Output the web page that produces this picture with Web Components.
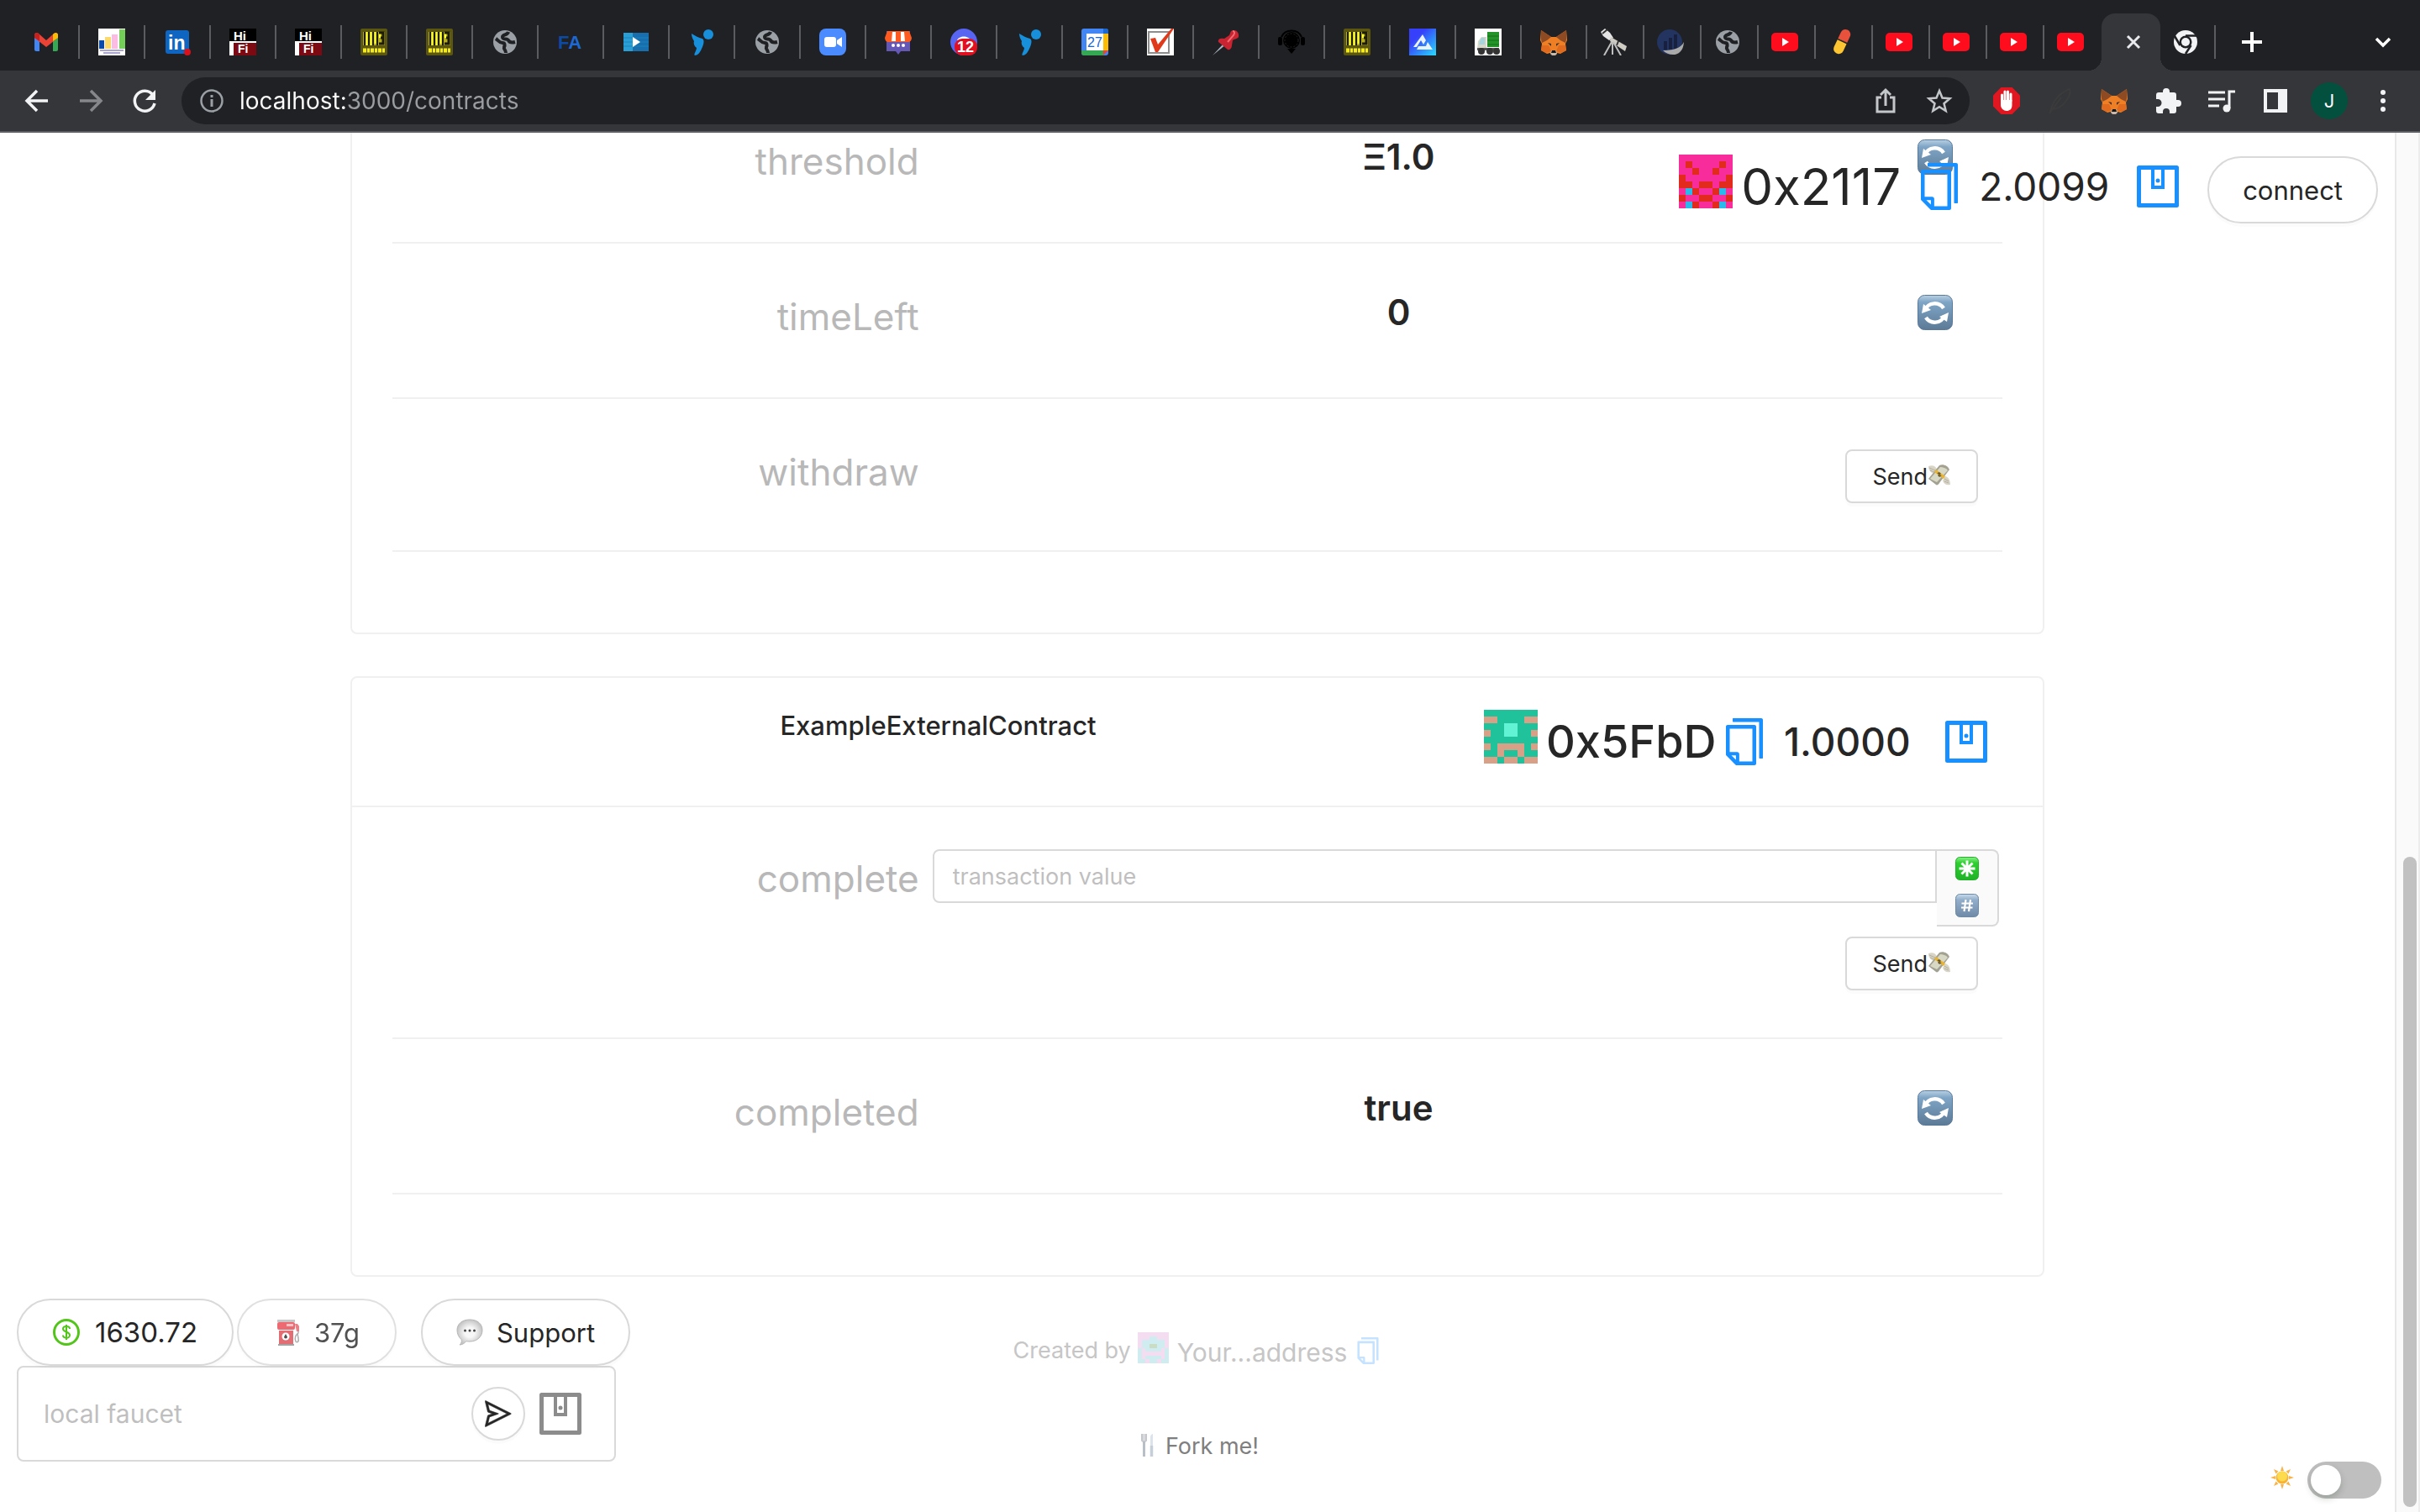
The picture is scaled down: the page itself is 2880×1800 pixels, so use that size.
<!DOCTYPE html>
<html lang="en">
<head>
<meta charset="utf-8">
<title>localhost:3000/contracts</title>
<style>
html,body{margin:0;height:100%}
body{background:#fff;color:#262626;font-family:Inter,"Liberation Sans",sans-serif;overflow:hidden}
</style>
</head>
<body>
<browser-window></browser-window>
<script>
const globe='<circle cx="16" cy="16" r="14" fill="#9aa0a6"/><path d="M5 12c3 2 4 5 8 5 3 0 3 3 2 5-1 3 2 3 2 7" fill="none" stroke="#202124" stroke-width="4"/><path d="M20 4c-1 4-7 3-7 6 0 4 6 1 7 4 1 2 4 3 8 2" fill="none" stroke="#202124" stroke-width="4"/>';
const mp3='<rect width="32" height="32" rx="2" fill="#5c5710"/><path d="M3 4h26v16H3z" fill="#b5ac1f"/><path d="M5 4v16M10 4v16M15 4v16M20 4v16" stroke="#1c1b08" stroke-width="2"/><path d="M7.500 4v16M12.500 4v16M17.500 4v14M23 4v7" stroke="#ffff25" stroke-width="2"/><path d="M22 5h5v6h-3 3v7h-5" fill="none" stroke="#1c1b08" stroke-width="3"/><path d="M3 26h26" stroke="#f3ea22" stroke-width="5" stroke-dasharray="4 1 3 1"/>';
const hifi='<rect width="32" height="32" fill="#fff"/><rect width="32" height="15" fill="#000"/><text x="5" y="14" font-family="Liberation Sans" font-weight="700" font-size="15" fill="#fff">Hi</text><rect x="5" y="17" width="27" height="15" fill="#7d0912"/><text x="10" y="29" font-family="Liberation Sans" font-weight="700" font-size="14" fill="#fff">Fi</text>';
const bird='<circle cx="24" cy="7" r="6" fill="#178fdb"/><path d="M4 6c5 3 8 5 13 6 3 2 1 8-1 12-2 5-5 8-8 8-2-1 2-6 2-9-3-2-4-6-3-8C5 12 4 9 4 6z" fill="#178fdb"/>';
const yt='<rect y="5" width="32" height="22" rx="5" fill="#ff0d1d"/><path d="M13 11l8 5-8 5z" fill="#fff"/>';
const fox='<path d="M1 2l12 8h6l12-8 1 12-2 4 1 8-7 4-4-1-4 3-4-3-4 1-7-4 1-8-2-4z" fill="#ee7f25"/><path d="M1 2l12 8-5 4-6 3-1-4zM31 2l-12 8 5 4 6 3 1-4z" fill="#8e4a22"/><path d="M2 20h8l3 7-6 2-6-3zM30 20h-8l-3 7 6 2 6-3z" fill="#e06a1d"/><path d="M9 17l4 1v3zM23 17l-4 1v3z" fill="#3a3230"/><path d="M13 26h6l1 4-2 2h-4l-2-2z" fill="#c9b8a8"/><path d="M14 26h4l1 3h-6z" fill="#161616"/>';
const refresh='<defs><linearGradient id="g" x2="0" y2="1"><stop stop-color="#b9d0e2"/><stop offset=".2" stop-color="#7fa5c6"/><stop offset="1" stop-color="#5c7a96"/></linearGradient></defs><rect x=".5" y=".5" width="41" height="41" rx="8" fill="url(#g)" stroke="#58799a"/><path d="M9 18a12.500 12.500 0 0 1 22-2" fill="none" stroke="#fff" stroke-width="4.500"/><path d="M32 25a12.500 12.500 0 0 1-22 2" fill="none" stroke="#fff" stroke-width="4.500"/><path d="M7 11l-2 11 11-4zM37 21l-2 11-9-6z" fill="#fff"/>';
const key=(a,b,c,inner)=>`<defs><linearGradient id="g" x2="0" y2="1"><stop stop-color="${a}"/><stop offset=".25" stop-color="${b}"/><stop offset="1" stop-color="${c}"/></linearGradient></defs><rect x=".5" y=".5" width="27" height="27" rx="5" fill="url(#g)" stroke="${c}"/>${inner}`;
const wallet='<path d="M2.500 2.500h45v45h-45z" fill="none" stroke="currentColor" stroke-width="5" stroke-linejoin="round"/><path d="M19 3v23h12V3" fill="none" stroke="currentColor" stroke-width="4"/><circle cx="25" cy="18" r="2.500" fill="currentColor"/>';
const ICONS={
gmail:[32,'<path d="M2 7h6v20H4a2 2 0 0 1-2-2z" fill="#4285f4"/><path d="M24 7h6v18a2 2 0 0 1-2 2h-4z" fill="#34a853"/><path d="M2 8c0-3 3-4 5-2l9 8 9-8c2-2 5-1 5 2v3L16 22 2 11z" fill="#ea4335"/><path d="M2 7.500C2 5 5 4 7 6l1 1v8l-6-4z" fill="#c5221f"/><path d="M30 7.500C30 5 27 4 25 6l-1 1v8l6-4z" fill="#fbbc04"/>'],
chart:[32,'<rect width="32" height="32" fill="#fff"/><path d="M1 14h6v10H1z" fill="#0b4aa8"/><path d="M8 10h7v14H8z" fill="#fbd96b"/><path d="M16 7h7v17h-7z" fill="#fbbbe3"/><path d="M25 1h7v23h-7z" fill="#73cf57"/><path d="M2 26h28M6 29h20" stroke="#a9a5cf" stroke-width="2"/>'],
linkedin:[32,'<rect x="2" y="2" width="28" height="28" rx="3" fill="#0f66c2"/><text x="5" y="25" font-family="Liberation Sans" font-weight="700" font-size="23" fill="#fff">in</text><circle cx="28" cy="28" r="4" fill="#d8111c"/>'],
hifi:[32,hifi],mp3:[32,mp3],globe:[32,globe],bird:[32,bird],yt:[32,yt],fox:[32,fox],
fa:[32,'<text x="1" y="24" font-family="Liberation Sans" font-weight="700" font-size="22" fill="#0d4aa5">F<tspan fill="#1d68d2">A</tspan></text>'],
play:[32,'<rect x="1" y="5" width="30" height="22" fill="#2a9fd6"/><path d="M12 5h19v22H12z" fill="#176fae"/><path d="M1 11h30M1 16h30M1 21h30" stroke="#1d83bd" stroke-width="1"/><path d="M12 10l9 6-9 6z" fill="#fff"/>'],
zoom:[32,'<rect width="32" height="32" rx="8" fill="#4a8cff"/><rect x="6" y="10" width="14" height="12" rx="3" fill="#fff"/><path d="M21 14l6-4v12l-6-4z" fill="#fff"/>'],
store:[32,'<path d="M2 3h28v24H19l-3 4-3-4H2z" fill="#6557b5"/><path d="M3 3h26l3 8c0 3-2 5-4 5H4c-2 0-4-2-4-5z" fill="#ff5a1f"/><path d="M9 4l-1 11h5V4zM19 4v11h5L23 4z" fill="#fff"/><circle cx="10" cy="20" r="2" fill="#fff"/><circle cx="16" cy="20" r="2" fill="#fff"/><circle cx="22" cy="20" r="2" fill="#fff"/>'],
discord:[32,'<circle cx="16" cy="16" r="16" fill="#5865f2"/><path d="M8 14c2-6 14-6 16 0z" fill="#fff"/><rect x="5" y="12" width="27" height="20" rx="9" fill="#e01021"/><text x="18" y="28" text-anchor="middle" font-family="Liberation Sans" font-weight="700" font-size="18" fill="#fff">12</text>'],
calendar:[32,'<rect width="32" height="32" rx="3" fill="#4285f4"/><path d="M26 6h6v20h-6z" fill="#fbbc04"/><path d="M0 26h26v6H2l-2-2z" fill="#34a853"/><path d="M26 26h6l-6 6z" fill="#ea4335"/><path d="M26 0h4l2 2v4h-6z" fill="#1967d2"/><rect x="6" y="6" width="20" height="20" fill="#fff"/><text x="16" y="22" text-anchor="middle" font-family="Liberation Sans" font-size="16" fill="#1967d2">27</text>'],
check:[32,'<rect width="32" height="32" fill="#fff"/><rect x="2" y="4" width="24" height="25" fill="#fff" stroke="#8d8d8d" stroke-width="2"/><path d="M4 12l6-1 3 8L29 0h3L13 28h-3z" fill="#e03a1c"/>'],
pin:[32,'<path d="M0 32L14 17l2 2z" fill="#a9b6c2"/><path d="M22 3c5-3 10 1 9 7-2 3-5 2-7 4l-1 6c0 4-3 6-5 5l-11-9c-1-4 3-5 7-4l6-4z" fill="#c92431"/><path d="M24 3c2 0 3 2 1 5l-7 8" stroke="#f06a70" stroke-width="2" fill="none"/>'],
headset:[32,'<circle cx="16" cy="14" r="10" fill="#000"/><path d="M4 10a13 12 0 0 1 24 0" fill="none" stroke="#000" stroke-width="2"/><rect x="0" y="10" width="5" height="10" rx="2"/><rect x="27" y="10" width="5" height="10" rx="2"/><circle cx="16" cy="14" r="8" fill="none" stroke="#25262a" stroke-dasharray="2 2"/><path d="M11 24l5 6 5-6z" fill="#000"/>'],
alchemy:[32,'<defs><linearGradient id="g" x2="1" y2="1"><stop offset=".3" stop-color="#363ff9"/><stop offset="1" stop-color="#28dcfc"/></linearGradient></defs><rect width="32" height="32" fill="url(#g)"/><path d="M16 7l4 7-3 5-3-5-5 8H5zM11 21h9l2-5 6 9H9z" fill="#e9f2ff"/>'],
truck:[32,'<rect width="32" height="32" fill="#fff"/><path d="M15 4h14v18H15z" fill="#249329"/><path d="M15 9h14M15 14h14M15 19h14" stroke="#14701a"/><path d="M4 15l4-5h6v15H3z" fill="#d9d8c8"/><path d="M6 15l2-4h4v8H5z" fill="#a5d4dc"/><path d="M3 23h26v3H3z" fill="#555"/><circle cx="8" cy="27" r="4" fill="#333"/><circle cx="18" cy="27" r="4" fill="#333"/><circle cx="26" cy="27" r="4" fill="#333"/>'],
telescope:[32,'<path d="M1 4l5-4 6 5 4 6-5 3-7-5z" fill="#e4e4e4"/><path d="M3 6l6-5" stroke="#333" stroke-width="2"/><path d="M13 10l19 11-2 6-18-12z" fill="#cfccc4"/><path d="M22 15l-2 5" stroke="#333" stroke-width="2"/><path d="M14 16L5 32M15 16v15M16 16l9 16" stroke="#bfbfbf" stroke-width="2" fill="none"/>'],
bars:[32,'<circle cx="15" cy="16" r="15" fill="#22345f"/><path d="M8 25V15h4v10zM14 25V11h4v14zM20 25V7h4v18z" fill="#17213f"/><path d="M32 16c-4 8-14 10-25 10 8 8 24 8 25-10z" fill="#a9aaa9"/>'],
pill:[32,'<g transform="rotate(25 16 16)"><path d="M10 14h12v11a6 6 0 0 1-12 0z" fill="#fcc531"/><path d="M10 14V6a6 6 0 0 1 12 0v8z" fill="#e8513b"/><path d="M9 15h14" stroke="#202124" stroke-width="1.500"/></g>'],
chrome:[32,'<circle cx="16" cy="16" r="14" fill="#f1f3f4"/><circle cx="16" cy="16" r="7.500" fill="#202124"/><circle cx="16" cy="16" r="5" fill="#f1f3f4"/><path d="M16 8.500h13M9.500 20L3 9M22.500 20L16 30" stroke="#202124" stroke-width="2.500"/>'],
close:[20,'<path d="M3 3l14 14M17 3L3 17" stroke="#e8eaed" stroke-width="3"/>'],
plus:[28,'<path d="M14 2v24M2 14h24" stroke="#fff" stroke-width="4"/>'],
chevron:[24,'<path d="M4 8l8 8 8-8" stroke="#fff" stroke-width="3.500" fill="none"/>'],
back:[32,'<path d="M29 16H5M16 4L4 16l12 12" stroke="#f1f3f4" stroke-width="3.500" fill="none"/>'],
forward:[32,'<path d="M3 16h24M16 4l12 12-12 12" stroke="#85878a" stroke-width="3.500" fill="none"/>'],
reload:[32,'<path d="M26 9a12 12 0 1 0 2 10" stroke="#f1f3f4" stroke-width="3.500" fill="none"/><path d="M29 3v12H17z" fill="#f1f3f4"/>'],
info:[32,'<circle cx="16" cy="16" r="12.500" stroke="#9aa0a6" stroke-width="2.500" fill="none"/><path d="M16 14v9M16 9v3" stroke="#9aa0a6" stroke-width="3"/>'],
share:[32,'<path d="M11 12H6v17h20V12h-5M16 22V3M10 9l6-6 6 6" stroke="#c4c7ca" stroke-width="3" fill="none"/>'],
star:[32,'<path d="M16 4l3.500 8.500 9 .7-7 6 2.200 8.800L16 23.200 8.300 28l2.200-8.800-7-6 9-.7z" stroke="#c4c7ca" stroke-width="2.500" fill="none"/>'],
adblock:[32,'<path d="M9.400 0h13.200L32 9.400v13.200L22.600 32H9.400L0 22.600V9.400z" fill="#e01620"/><path d="M10.500 16V9M14 15V5M17.500 15V5M21 16V8" stroke="#fff" stroke-width="3" stroke-linecap="round"/><path d="M9 15h13.500v6c0 5-3 7-6.500 7s-7-3-7-7z" fill="#fff"/>'],
feather:[32,'<path d="M4 29c2-9 8-21 23-27 2 5-4 21-19 24M3 31l14-19" stroke="#3b3b3b" stroke-width="2" fill="none"/>'],
puzzle:[32,'<path d="M28 15h-2V9a3 3 0 0 0-3-3h-5V5a4 4 0 0 0-8 0v1H5a3 3 0 0 0-3 3v5h2a4 4 0 0 1 0 9H2v5a3 3 0 0 0 3 3h5v-2a4 4 0 0 1 8 0v2h5a3 3 0 0 0 3-3v-5h2a4 4 0 0 0 0-8z" fill="#f1f3f4"/>'],
music:[32,'<path d="M0 6h20M0 14h20M0 22h13" stroke="#f1f3f4" stroke-width="3"/><path d="M25 25V5h7" stroke="#f1f3f4" stroke-width="3" fill="none"/><circle cx="22" cy="25" r="4.500" fill="#f1f3f4"/>'],
panel:[32,'<path d="M4 4h24v24H4z" stroke="#f1f3f4" stroke-width="4" fill="none"/><path d="M19 3h10v26H19z" fill="#f1f3f4"/>'],
dots:[32,'<circle cx="16" cy="6" r="3" fill="#f1f3f4"/><circle cx="16" cy="16" r="3" fill="#f1f3f4"/><circle cx="16" cy="26" r="3" fill="#f1f3f4"/>'],
refresh:[42,refresh],
star8:[28,key('#8df08c','#2dd02f','#1fb226','<path d="M14 4.500v19M4.500 14h19M7.500 7.500l13 13M20.500 7.500l-13 13" stroke="#fff" stroke-width="3"/>')],
hash:[28,key('#c9dceb','#92aeca','#6f8aa6','<path d="M12.500 7l-2 14M18 7l-2 14M7.500 11.500h13.500M7 16.500h13.500" stroke="#fff" stroke-width="2.200"/>')],
money:[28,'<path d="M1 3c5-2 9 0 10 4l-3 5C4 11 1 8 1 3zM27 25c-5 1-8-1-9-5l3-5c4 1 6 5 6 10z" fill="#d9d5c6"/><path d="M2 5l7 3M3 8l5 2M20 18l5 3M20 21l5 2" stroke="#b3afa0"/><path d="M1 18L14 2c4-2 10 0 12 5L14 23c-1 2-3 3-4 2z" fill="#a3a292"/><path d="M3 18L15 4c3 0 7 1 9 4L11 22z" fill="#d8d9c5"/><path d="M8 10l11 8 2-3-11-8z" fill="#e9b433"/><path d="M12 12c2-2 4 0 2 1s0 3 2 1" stroke="#5d5331" stroke-width="1.500" fill="none"/>'],
copy:[0,'<path fill="currentColor" d="M832 64H296c-4.400 0-8 3.600-8 8v56c0 4.400 3.600 8 8 8h496v688c0 4.400 3.600 8 8 8h56c4.400 0 8-3.600 8-8V96c0-17.700-14.300-32-32-32zM704 192H192c-17.700 0-32 14.300-32 32v530.700c0 8.500 3.400 16.600 9.400 22.600l173.300 173.300c2.200 2.200 4.700 4 7.400 5.500v1.900h4.200c3.500 1.300 7.200 2 11 2H704c17.700 0 32-14.300 32-32V224c0-17.700-14.300-32-32-32zM350 856.200L263.900 770H350v86.200zM664 888H414V746c0-22.100-17.900-40-40-40H232V264h432v624z"/>'],
send:[0,'<path fill="currentColor" stroke="currentColor" stroke-width="14" d="M931.400 498.900L94.900 79.500c-3.400-1.700-7.300-2.100-11-1.200a15.990 15.990 0 0 0-11.700 19.300l86.200 352.200c1.300 5.300 5.200 9.600 10.400 11.300l147.700 50.700-147.600 50.700c-5.200 1.800-9.100 6-10.300 11.300L72.200 926.500c-.9 3.700-.5 7.600 1.200 10.900 3.900 7.900 13.500 11.100 21.500 7.200l836.500-417c3.100-1.500 5.600-4.100 7.200-7.100 3.900-8 .7-17.600-7.200-21.600zM170.800 826.300l50.300-205.600 295.200-101.300c2.300-.8 4.200-2.600 5-5 1.400-4.200-.8-8.700-5-10.200L221.100 403 171 198.200l628 314.900-628.200 313.200z"/>'],
wallet:[50,wallet],
dollar:[32,'<circle cx="16" cy="16" r="14.500" stroke="#52c41a" stroke-width="3" fill="none"/><path d="M20 12c0-4-8-4-8 0s8 3 8 7.500-8 4-8 0M16 7v18" stroke="#52c41a" stroke-width="2" fill="none"/>'],
fuel:[32,'<rect x="4" y="1" width="21" height="3" fill="#b9b9b9"/><rect x="4" y="4" width="21" height="9" rx="2" fill="#ea4650"/><rect x="15" y="6" width="8" height="3" fill="#f9b5b8"/><path d="M6 14h17v16H6z" fill="#dc4a52"/><path d="M5 30h19v2H5z" fill="#8d8d8d"/><circle cx="14" cy="21" r="4.500" fill="#fff"/><path d="M14 18l2 3.500a2 2 0 0 1-4 0z" fill="#222"/><path d="M26 7l3 2v8c-3 2-5 6-3 10 2 2 4 0 3-4l-1-6" stroke="#9a9a9a" stroke-width="1.500" fill="none"/><path d="M25 6h3l2 3v6h-3z" fill="#e2636a"/>'],
bubble:[32,'<defs><radialGradient id="g"><stop offset=".4" stop-color="#f7f7f7"/><stop offset="1" stop-color="#c5c5c5"/></radialGradient></defs><path d="M16 1c9 0 15 5 15 12.500S25 27 16 27c-2 0-3 0-4-.5C10 29 7 31 4 31c2-2 3-4 2-6.500C3 22 1 18 1 13.500 1 6 7 1 16 1z" fill="url(#g)" stroke="#b5b5b5"/><circle cx="10.500" cy="14" r="1.500" fill="#444"/><circle cx="16" cy="14" r="1.500" fill="#444"/><circle cx="21.500" cy="14" r="1.500" fill="#444"/>'],
fork:[28,'<path d="M7 0v8a3 3 0 0 0 5 0V0" stroke="#c4c7cb" stroke-width="2" fill="#d8dadd"/><path d="M9.500 9v18" stroke="#b9bfc6" stroke-width="3"/><path d="M17 14V4c0-3 2-4 3-4v14z" fill="#dbe3ec"/><path d="M18.500 14v13" stroke="#c6ced8" stroke-width="3.500"/>'],
sun:[28,'<g fill="#f8b44a"><path d="M12 6l2-6 2 6zM12 22l2 6 2-6zM6 12l-6 2 6 2zM22 12l6 2-6 2zM6.500 9.500L4 4l5.500 2.500zM21.500 9.500L24 4l-5.500 2.500zM6.500 18.500L4 24l5.500-2.500zM21.500 18.500L24 24l-5.500-2.500z"/></g><circle cx="14" cy="14" r="7.500" fill="#f9b233"/><circle cx="14" cy="12.500" r="6" fill="#fddb4f"/>']
};
const define=(name,render)=>customElements.define(name,class extends HTMLElement{
  connectedCallback(){
    if(this.shadowRoot)return;
    const t=document.createElement('template');
    t.innerHTML='<style>*{box-sizing:border-box}:where(button){font:inherit;color:inherit;cursor:pointer;background:none;border:0;padding:0}</style>'+render(this);
    this.attachShadow({mode:'open'}).append(t.content.cloneNode(true));
  }
});

define('ui-icon',el=>{
  const [s,body]=ICONS[el.getAttribute('name')];
  const px=el.getAttribute('size')||s||32;
  return `<style>:host{display:block;flex:none;line-height:0}svg{display:block}</style><svg width="${px}" height="${px}" viewBox="${s?`0 0 ${s} ${s}`:'64 64 896 896'}" aria-hidden="true">${body}</svg>`;
});

const BLOCKIES={
  pink:[{'.':'#f92c9c',a:'#e22b1c',b:'#2bb8ea'},'........|.a....a.|..a..a..|a......a|aa.aa.aa|.ba..ab.|a..aa..a|.ba..ab.'],
  green:[{'.':'#1fc29a',a:'#d9a088',b:'#62f3d4'},'........|aa....aa|...bb...|a..bb..a|........|a.aaaa.a|..a..a..|aa.aa.aa'],
  pale:[{'.':'#f4dcf1',a:'#cfedf0',b:'#cbdcc4'},'........|...aa...|.aaaaaa.|.aabbaa.|a.aaaa.a|a......a|a.aaaa.a|aa.aa.aa']
};
define('block-avatar',el=>{
  const [c,g]=BLOCKIES[el.getAttribute('kind')],px=el.getAttribute('size')||64;
  const cells=g.split('|').flatMap((r,y)=>[...r].map((k,x)=>k==='.'?'':`<rect x="${x}" y="${y}" width="1" height="1" fill="${c[k]}"/>`)).join('');
  return `<style>:host{display:block;flex:none}svg{display:block}</style><svg width="${px}" height="${px}" viewBox="0 0 8 8" shape-rendering="crispEdges" aria-hidden="true"><rect width="8" height="8" fill="${c['.']}"/>${cells}</svg>`;
});

define('tab-strip',()=>{
  const wide='gmail chart linkedin hifi hifi mp3 mp3 globe fa play bird globe zoom store discord bird calendar check pin headset mp3 alchemy truck fox'.split(' ');
  const slim='telescope bars globe yt pill yt yt yt yt'.split(' ');
  const tab=(n,c)=>`<button class="tab ${c}" role="tab" aria-label="${n}"><ui-icon name="${n}"></ui-icon></button>`;
  return `<style>
  :host{display:flex;align-items:center;height:84px;background:#202124;padding:16px 24px 0 17px}
  nav{display:flex;align-items:center;height:68px}
  button{display:flex}
  .tab{align-items:center;justify-content:center;height:40px;width:78px;border-right:2px solid #5a5c5f;flex:none}
  .tab.slim{width:68px;padding-right:4px}
  .tab.end{border-color:transparent}
  .tab.last{width:66px;padding-right:4px}
  .active{position:relative;display:flex;align-items:center;justify-content:center;align-self:stretch;width:70px;background:#35363a;border-radius:16px 16px 0 0;flex:none;padding-left:6px}
  .active::before,.active::after{content:"";position:absolute;bottom:0;width:16px;height:16px}
  .active::before{right:100%;background:radial-gradient(circle at 0 0,transparent 16px,#35363a 16px)}
  .active::after{left:100%;background:radial-gradient(circle at 100% 0,transparent 16px,#35363a 16px)}
  .new{margin-left:29px}.more{margin-left:auto;margin-right:8px}
  </style><nav role="tablist">${wide.map(n=>tab(n,'')).join('')}${slim.map((n,i)=>tab(n,i===slim.length-1?'slim end':'slim')).join('')}
  <div class="active" role="tab" aria-selected="true"><button aria-label="Close tab"><ui-icon name="close"></ui-icon></button></div>
  ${tab('chrome','last')}</nav><button class="new" aria-label="New tab"><ui-icon name="plus"></ui-icon></button><button class="more" aria-label="Search tabs"><ui-icon name="chevron"></ui-icon></button>`;
});

define('tool-bar',()=>{
  const b=(n,l)=>`<button aria-label="${l}"><ui-icon name="${n}"></ui-icon></button>`;
  return `<style>
  :host{display:flex;align-items:center;height:74px;background:#35363a;border-bottom:2px solid #5d5e62;padding:0 28px}
  button{display:flex}
  .nav{display:flex;gap:32px;margin-right:28px}
  .omni{display:flex;align-items:center;flex:1;height:56px;border-radius:28px;background:#202124;padding:0 20px}
  input{flex:1;min-width:0;height:40px;margin-left:17px;border:0;outline:0;padding:0;font:28px Inter,sans-serif;color:transparent;background:linear-gradient(90deg,#fff 126px,#9a9da1 126px);-webkit-background-clip:text;background-clip:text}
  .omni-actions{display:flex;gap:32px}
  .ext{display:flex;align-items:center;gap:32px;margin-left:28px}
  .avatar{width:44px;height:44px;margin:0 -6px;border-radius:50%;background:#04503e;color:#fff;align-items:center;justify-content:center;font-size:22px}
  </style><div class="nav">${b('back','Back')}${b('forward','Forward')}${b('reload','Reload')}</div>
  <div class="omni"><ui-icon name="info"></ui-icon><input aria-label="Address" value="localhost:3000/contracts"><div class="omni-actions">${b('share','Share')}${b('star','Bookmark')}</div></div>
  <div class="ext">${b('adblock','AdBlock')}${b('feather','Feather')}${b('fox','MetaMask')}${b('puzzle','Extensions')}${b('music','Media')}${b('panel','Side panel')}<button class="avatar">J</button>${b('dots','Menu')}</div>`;
});

define('account-chip',el=>`<style>
  :host{display:flex;align-items:center;height:80px;white-space:nowrap}
  block-avatar{margin-bottom:12px}
  .addr{font-size:var(--addr-size,60px);line-height:80px;width:218px;padding-left:10px}
  .bal{font-size:46px;line-height:80px;width:var(--bal-width,188px);margin-left:19px}
  button{display:flex;color:#1890ff}
  </style><block-avatar kind="${el.getAttribute('kind')}"></block-avatar><span class="addr">${el.getAttribute('address')}</span><button aria-label="Copy"><ui-icon name="copy" size="56"></ui-icon></button><span class="bal">${el.getAttribute('balance')}</span><button aria-label="Wallet"><ui-icon name="wallet"></ui-icon></button>`);

define('account-bar',()=>`<style>
  :host{display:flex;align-items:center;gap:34px}
  .btn{height:80px;padding:0 40px;border:2px solid #d9d9d9;border-radius:40px;background:#fff;box-shadow:0 4px 0 rgba(0,0,0,.016);font-size:31px;margin-top:8px}
  </style><account-chip kind="pink" address="0x2117" balance="2.0099"></account-chip><button class="btn">connect</button>`);

define('send-button',()=>`<style>
  :host{display:block}
  .btn{display:flex;align-items:center;height:64px;padding:0 30px;border:2px solid #d9d9d9;border-radius:8px;background:#fff;box-shadow:0 4px 0 rgba(0,0,0,.016);font-size:27px}
  ui-icon{margin-bottom:2px}
  </style><button class="btn">Send<ui-icon name="money"></ui-icon></button>`);

define('contract-row',el=>`<style>
  :host{display:grid;grid-template-columns:minmax(0,1fr) minmax(0,2fr);padding:52px 0 56px;border-bottom:2px solid #f0f0f0}
  :host([kind=payable]){padding-top:50px}
  .label{font-size:44px;line-height:60px;color:#b8b8b8;text-align:right;padding:5px 12px 0 0}
  </style><div class="label">${el.getAttribute('label')}</div><slot></slot>`);

define('value-view',el=>`<style>
  :host{display:grid;grid-template-columns:minmax(0,7fr) minmax(0,1fr);height:75px}
  .value{text-align:center;font-size:42px;line-height:60px;font-weight:600}
  button{display:flex;justify-content:center;align-items:center;height:60px}
  </style><div class="value">${el.getAttribute('value')}</div><button aria-label="Refresh"><ui-icon name="refresh"></ui-icon></button>`);

define('send-view',()=>`<style>:host{display:flex;justify-content:flex-end;padding:8px 29px 0 0}</style><send-button></send-button>`);

define('payable-view',()=>`<style>
  :host{display:flex;flex-direction:column;gap:12px;padding:0 4px}
  .group{display:flex;align-items:flex-start}
  input{flex:1;min-width:0;height:64px;border:2px solid #d9d9d9;border-radius:8px 0 0 8px;padding:0 22px;font:27px Inter,sans-serif;color:#262626;background:#fff;outline:0}
  input::placeholder{color:#bfbfbf;opacity:1}
  .addon{display:flex;flex-direction:column;align-items:center;gap:16px;width:74px;height:92px;padding-top:7px;background:#fafafa;border:2px solid #d9d9d9;border-left:0;border-radius:0 8px 8px 0}
  .addon button{display:flex}
  .send{display:flex;justify-content:flex-end;padding-right:25px}
  </style><div class="group"><input aria-label="transaction value" placeholder="transaction value"><div class="addon"><button aria-label="Multiply"><ui-icon name="star8"></ui-icon></button><button aria-label="Hex"><ui-icon name="hash"></ui-icon></button></div></div><div class="send"><send-button></send-button></div>`);

define('contract-card',()=>`<style>
  :host{display:block;border:2px solid #f0f0f0;border-radius:8px;background:#fff}
  .body{padding:0 48px 96px}
  </style><slot name="head"></slot><div class="body"><slot></slot></div>`);

define('card-head',el=>`<style>
  :host{display:flex;align-items:center;height:154px;padding:0 66px 0 48px;border-bottom:2px solid #f0f0f0;font-weight:500;--addr-size:54px;--bal-width:192px}
  h3{flex:1;margin:0;padding-bottom:38px;text-align:center;font-size:31px;line-height:40px;font-weight:500}
  </style><h3>${el.getAttribute('heading')}</h3><slot></slot>`);

define('page-footer',()=>`<style>
  :host{display:flex;flex-direction:column;align-items:center;gap:63px;padding-top:58px}
  .by{display:flex;align-items:center;height:60px;color:#c6c6c6;font-size:27px;line-height:40px}
  block-avatar{margin:0 10px 8px 8px}
  .addr{font-size:30px;line-height:44px;padding-top:4px}
  .by button{display:flex;color:#c5e3ff;margin-left:9px}
  a{display:flex;align-items:center;gap:7px;height:40px;font-size:27px;color:#7f7f7f;text-decoration:none}
  </style><div class="by"><span>Created by</span><block-avatar kind="pale" size="37"></block-avatar><span class="addr">Your...address</span><button aria-label="Copy address"><ui-icon name="copy" size="32"></ui-icon></button></div>
  <a href="#fork"><ui-icon name="fork"></ui-icon>Fork me!</a>`);

define('dev-tools',()=>`<style>
  :host{display:block}
  .pills{display:grid;grid-template-columns:258px 190px 21px 249px;column-gap:4px}
  .pill{display:flex;align-items:center;justify-content:center;gap:16px;height:80px;border:2px solid #d9d9d9;border-radius:40px;background:#fff;box-shadow:0 4px 0 rgba(0,0,0,.016);font-size:31px}
  .price{gap:18px;font-size:33px}
  .gas{opacity:.8}.support{grid-column:4}
  .faucet{display:flex;align-items:center;width:713px;height:114px;border:2px solid #d9d9d9;border-radius:8px;background:#fff;padding:0 39px 0 30px}
  input{flex:1;min-width:0;height:60px;border:0;outline:0;padding:0;font:30px Inter,sans-serif;background:none}
  input::placeholder{color:#bfbfbf;opacity:1}
  .go{display:flex;align-items:center;justify-content:center;width:64px;height:64px;border:2px solid #d9d9d9;border-radius:50%;background:#fff;box-shadow:0 4px 0 rgba(0,0,0,.016);margin-right:17px}
  .wallet{display:flex;color:#8c8c8c}
  </style><div class="pills"><button class="pill price"><ui-icon name="dollar"></ui-icon>1630.72</button><button class="pill gas"><ui-icon name="fuel"></ui-icon>37g</button><button class="pill support"><ui-icon name="bubble"></ui-icon>Support</button></div>
  <div class="faucet"><input aria-label="local faucet" placeholder="local faucet"><button class="go" aria-label="Send"><ui-icon name="send" size="32"></ui-icon></button><button class="wallet" aria-label="Wallet"><ui-icon name="wallet"></ui-icon></button></div>`);

define('theme-switch',()=>`<style>
  :host{display:flex;align-items:center;gap:16px}
  ui-icon{margin-bottom:6px}
  input{appearance:none;margin:0;width:88px;height:44px;border-radius:22px;background:#bfbfbf;padding:4px;cursor:pointer}
  input::before{content:"";display:block;width:36px;height:36px;border-radius:50%;background:#fff;box-shadow:0 4px 8px rgba(0,35,11,.2)}
  input:checked{background:#1890ff}input:checked::before{margin-left:auto}
  </style><ui-icon name="sun"></ui-icon><input type="checkbox" role="switch" aria-label="Dark mode">`);

define('scroll-track',()=>`<style>
  :host{display:flex;flex-direction:column;width:30px;flex:none;background:#fafafa;border-left:2px solid #e8e8e8;border-right:2px solid #ededed;padding:0 2px 6px 8px;box-sizing:border-box}
  i{display:block;margin-top:auto;height:47.300%;border-radius:8px;background:#c1c1c1}
  </style><i></i>`);

define('contracts-page',()=>`<style>
  :host{display:block;position:relative;flex:1;min-width:0;overflow:hidden}
  main{display:flex;flex-direction:column;gap:50px;padding:0 417px;margin-top:-55px}
  account-bar{position:absolute;top:20px;right:20px}
  dev-tools{position:absolute;left:20px;bottom:60px}
  theme-switch{position:absolute;right:16px;bottom:16px}
  </style><main>
  <contract-card><contract-row label="threshold"><value-view value="Ξ1.0"></value-view></contract-row><contract-row label="timeLeft"><value-view value="0"></value-view></contract-row><contract-row label="withdraw"><send-view></send-view></contract-row></contract-card>
  <contract-card><card-head slot="head" heading="ExampleExternalContract"><account-chip kind="green" address="0x5FbD" balance="1.0000"></account-chip></card-head><contract-row kind="payable" label="complete"><payable-view></payable-view></contract-row><contract-row label="completed"><value-view value="true"></value-view></contract-row></contract-card>
  </main><page-footer></page-footer><account-bar></account-bar><dev-tools></dev-tools><theme-switch></theme-switch>`);

define('browser-window',()=>`<style>
  :host{display:flex;flex-direction:column;height:100vh}
  .view{display:flex;flex:1;min-height:0}
  </style><tab-strip></tab-strip><tool-bar></tool-bar><div class="view"><contracts-page></contracts-page><scroll-track></scroll-track></div>`);
</script>
</body>
</html>
